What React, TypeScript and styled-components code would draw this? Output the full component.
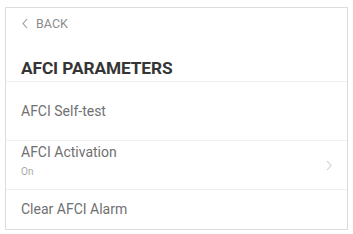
import React from "react";
import styled, { createGlobalStyle } from "styled-components";

const GlobalStyle = createGlobalStyle`
  html, body {
    margin: 0;
    padding: 0;
    background: #ffffff;
  }
  body {
    font-family: Roboto, "Liberation Sans", sans-serif;
  }
`;

const Card = styled.div`
  margin: 7px 5px 0 5px;
  width: 341px;
  height: 221px;
  border: 1px solid #dcdcdc;
  background: #fff;
  display: flex;
  flex-direction: column;
  overflow: hidden;
`;

const Header = styled.div`
  padding: 0 15px;
  height: 73px;
  display: flex;
  flex-direction: column;
  border-bottom: 1px solid #f0f0f0;
`;

const Back = styled.div`
  display: flex;
  align-items: center;
  gap: 8px;
  margin-top: 8px;
  height: 14px;
  padding-left: 1px;
  color: #8a8a8a;
  font-size: 12.5px;
`;

const Title = styled.div`
  margin-top: 29px;
  color: #353535;
  font-size: 17.3px;
  font-weight: 700;
  line-height: 18px;
  letter-spacing: -0.1px;
`;

const Row = styled.div<{ $h: number; $lift?: number }>`
  height: ${(p) => p.$h}px;
  padding: 0 15px ${(p) => p.$lift ?? 0}px 15px;
  box-sizing: border-box;
  display: flex;
  align-items: center;
  justify-content: space-between;
  border-bottom: 1px solid #f0f0f0;
  &:last-child {
    border-bottom: none;
  }
`;

const Label = styled.div`
  color: #707070;
  font-size: 14px;
  line-height: 16px;
`;

const Sub = styled.div`
  color: #a8a8a8;
  font-size: 10px;
  margin-top: 6px;
`;

const Arrow = styled.div`
  display: flex;
  margin-top: 10px;
`;

const Chevron = ({ color, size }: { color: string; size: number }) => (
  <svg width={size * 0.55} height={size} viewBox="0 0 6 11" fill="none">
    <path d="M1 1 L5 5.5 L1 10" stroke={color} strokeWidth="1.1" />
  </svg>
);

const App: React.FC = () => {
  return (
    <>
      <GlobalStyle />
      <Card>
        <Header>
          <Back>
            <span style={{ transform: "scaleX(-1)", display: "flex" }}>
              <Chevron color="#9a9a9a" size={11} />
            </span>
            BACK
          </Back>
          <Title>AFCI PARAMETERS</Title>
        </Header>
        <Row $h={59}>
          <Label>AFCI Self-test</Label>
        </Row>
        <Row $h={49} $lift={10}>
          <div>
            <Label>AFCI Activation</Label>
            <Sub>On</Sub>
          </div>
          <Arrow>
            <Chevron color="#cfcfcf" size={11} />
          </Arrow>
        </Row>
        <Row $h={38}>
          <Label>Clear AFCI Alarm</Label>
        </Row>
      </Card>
    </>
  );
};

export default App;
